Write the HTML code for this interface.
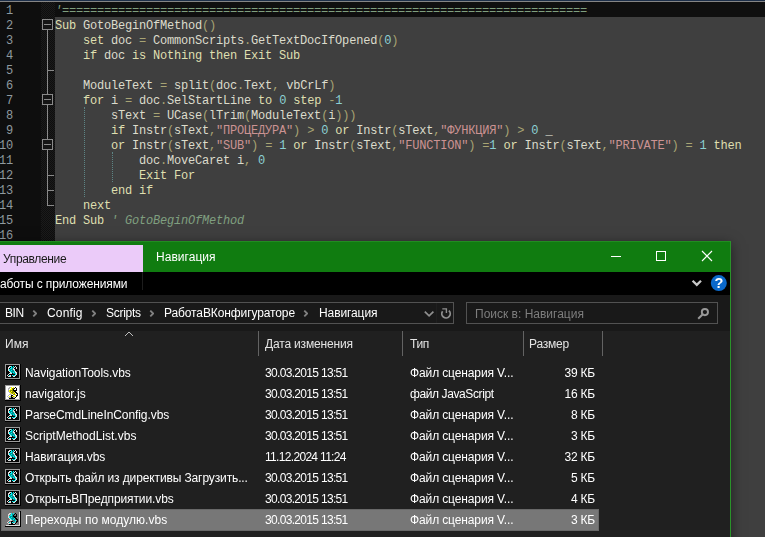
<!DOCTYPE html>
<html lang="ru">
<head>
<meta charset="utf-8">
<title>Навигация</title>
<style>
*{box-sizing:border-box;margin:0;padding:0}
html,body{width:765px;height:537px;overflow:hidden;background:#3f3f3f}
body{position:relative;font-family:"Liberation Sans",sans-serif}
.abs{position:absolute}
/* ---------- editor ---------- */
#ed{position:absolute;left:0;top:0;width:765px;height:537px;background:#3f3f3f}
#topa{left:0;top:0;width:765px;height:1px;background:#1d2f49}
#topb{left:0;top:1px;width:765px;height:1px;background:#858585}
#num{left:0;top:2px;width:41px;height:240px;background:#0e0e0e}
#fold{left:41px;top:2px;width:14px;height:240px;background:#151515;
 background-image:conic-gradient(#0e0e0e 25%,#1b1b1b 0 50%,#0e0e0e 0 75%,#1b1b1b 0);background-size:2px 2px}
#cur{left:55px;top:2px;width:710px;height:15px;background:#0f0f0f}
.ln{position:absolute;left:0;width:765px;height:15px;font:12px/15px "Liberation Mono",monospace;letter-spacing:-0.2px;white-space:pre;color:#dcdccc}
.ln .n{position:absolute;left:-1px;top:2px;width:14px;text-align:right;color:#8f9a9f}
.ln .c{position:absolute;left:55px;top:2px}
.k{color:#dfdfaf}.o{color:#a8a474}.d{color:#8cd0d3}.s{color:#cc9393}.cm{color:#7f9f7f;font-style:italic}.cn{color:#7f9f7f}
.fb{position:absolute;left:42px;width:11px;height:11px;border:1px solid #8a8a8a;background:#151515}
.fb:after{content:"";position:absolute;left:1px;top:4px;width:7px;height:1px;background:#8a8a8a}
.fv{position:absolute;left:47px;width:1px;background:#8a8a8a}
.ft{position:absolute;left:47px;width:7px;height:1px;background:#8a8a8a}
.ig{position:absolute;width:0;border-left:1px dotted #5d8585}
/* ---------- explorer window ---------- */
#win{will-change:transform;left:0;top:241px;width:731px;height:340px;background:#202020;border-right:1px solid #2a932a;box-shadow:0 3px 12px 0 rgba(0,0,0,.5)}
#title{left:0;top:0;width:730px;height:31px;background:#107c10;border-top:1px solid #218c21}
#tab{left:0;top:4px;width:143px;height:27px;background:#ebcbf9;color:#1a1a1a;font-size:12px;line-height:29px;padding-left:3px;letter-spacing:-.35px}
#ttl{left:156px;top:4px;height:27px;line-height:25px;color:#fff;font-size:12px;letter-spacing:.03px}
#rib{left:0;top:31px;width:730px;height:23px;background:#000;color:#fff;font-size:12px;line-height:24px;letter-spacing:-.12px}
#ribsep{left:142px;top:31px;width:1px;height:18px;background:#1d1d1d}
#bar{left:0;top:54px;width:730px;height:36px;background:#191919}
#addr{left:-4px;top:61px;width:458px;height:22px;border:1px solid #525252;background:#191919}
#addrsep{left:436px;top:62px;width:1px;height:20px;background:#1f1f1f}
#srch{left:466px;top:61px;width:252px;height:22px;border:1px solid #525252;background:#191919;color:#7e7e7e;font-size:12px;line-height:22px;padding-left:8px;letter-spacing:0}
.bc{position:absolute;top:61px;height:22px;line-height:23px;color:#fff;font-size:12px;white-space:nowrap}
.bca{position:absolute;top:69px;width:5px;height:7px}
#hdr{left:0;top:90px;width:730px;height:25px;background:#202020}
.hs{position:absolute;top:90px;width:1px;height:25px;background:#636363}
.ht{position:absolute;top:90px;height:25px;line-height:26px;font-size:12px;color:#e4e4e4;white-space:nowrap}
.row{position:absolute;left:0;width:730px;height:21px;font-size:12px;line-height:21px;color:#fff;white-space:nowrap}
.row span{position:absolute;top:1px}
.row .f{left:25px}.row .dt{left:265px;letter-spacing:-.68px}.row .ty{left:410px;letter-spacing:-.12px}.row .sz{right:135px;text-align:right;letter-spacing:-.2px}
.row svg{position:absolute;left:5px;top:2px}
#sel{left:1px;top:268px;width:598px;height:22px;background:#777;border:1px solid #686868}
</style>
</head>
<body>
<div id="ed">
 <div id="topa" class="abs"></div><div id="topb" class="abs"></div>
 <div id="num" class="abs"></div><div id="fold" class="abs"></div><div id="cur" class="abs"></div>

 <!-- fold markers -->
 <div class="fv" style="top:30px;height:176px"></div>
 <div class="fb" style="top:19px"></div>
 <div class="ft" style="top:70px"></div>
 <div class="fb" style="top:94px"></div>
 <div class="fb" style="top:139px"></div>
 <div class="ft" style="top:175px"></div>
 <div class="ft" style="top:190px"></div>
 <div class="ft" style="top:205px"></div>
 <!-- indent guides -->
 <div class="ig" style="left:84px;top:107px;height:90px"></div>
 <div class="ig" style="left:112px;top:152px;height:30px"></div>

 <div class="ln" style="top:2px"><span class="n">1</span><span class="c"><span class="cm">'===========================================================================</span></span></div>
 <div class="ln" style="top:17px"><span class="n">2</span><span class="c"><span class="k">Sub</span> GotoBeginOfMethod<span class="o">()</span></span></div>
 <div class="ln" style="top:32px"><span class="n">3</span><span class="c">    <span class="k">set</span> doc <span class="o">=</span> CommonScripts<span class="o">.</span>GetTextDocIfOpened<span class="o">(</span><span class="d">0</span><span class="o">)</span></span></div>
 <div class="ln" style="top:47px"><span class="n">4</span><span class="c">    <span class="k">if</span> doc <span class="k">is Nothing then Exit Sub</span></span></div>
 <div class="ln" style="top:62px"><span class="n">5</span><span class="c"> </span></div>
 <div class="ln" style="top:77px"><span class="n">6</span><span class="c">    ModuleText <span class="o">=</span> split<span class="o">(</span>doc<span class="o">.</span>Text<span class="o">,</span> vbCrLf<span class="o">)</span></span></div>
 <div class="ln" style="top:92px"><span class="n">7</span><span class="c">    <span class="k">for</span> i <span class="o">=</span> doc<span class="o">.</span>SelStartLine <span class="k">to</span> <span class="d">0</span> <span class="k">step</span> <span class="o">-</span><span class="d">1</span></span></div>
 <div class="ln" style="top:107px"><span class="n">8</span><span class="c">        sText <span class="o">=</span> UCase<span class="o">(</span>lTrim<span class="o">(</span>ModuleText<span class="o">(</span>i<span class="o">)))</span></span></div>
 <div class="ln" style="top:122px"><span class="n">9</span><span class="c">        <span class="k">if</span> Instr<span class="o">(</span>sText<span class="o">,</span><span class="s">"ПРОЦЕДУРА"</span><span class="o">)</span> <span class="o">&gt;</span> <span class="d">0</span> <span class="k">or</span> Instr<span class="o">(</span>sText<span class="o">,</span><span class="s">"ФУНКЦИЯ"</span><span class="o">)</span> <span class="o">&gt;</span> <span class="d">0</span> _</span></div>
 <div class="ln" style="top:137px"><span class="n">10</span><span class="c">        <span class="k">or</span> Instr<span class="o">(</span>sText<span class="o">,</span><span class="s">"SUB"</span><span class="o">)</span> <span class="o">=</span> <span class="d">1</span> <span class="k">or</span> Instr<span class="o">(</span>sText<span class="o">,</span><span class="s">"FUNCTION"</span><span class="o">)</span> <span class="o">=</span><span class="d">1</span> <span class="k">or</span> Instr<span class="o">(</span>sText<span class="o">,</span><span class="s">"PRIVATE"</span><span class="o">)</span> <span class="o">=</span> <span class="d">1</span> <span class="k">then</span></span></div>
 <div class="ln" style="top:152px"><span class="n">11</span><span class="c">            doc<span class="o">.</span>MoveCaret i<span class="o">,</span> <span class="d">0</span></span></div>
 <div class="ln" style="top:167px"><span class="n">12</span><span class="c">            <span class="k">Exit For</span></span></div>
 <div class="ln" style="top:182px"><span class="n">13</span><span class="c">        <span class="k">end if</span></span></div>
 <div class="ln" style="top:197px"><span class="n">14</span><span class="c">    <span class="k">next</span></span></div>
 <div class="ln" style="top:212px"><span class="n">15</span><span class="c"><span class="k">End Sub</span> <span class="cm">' GotoBeginOfMethod</span></span></div>
 <div class="ln" style="top:227px"><span class="n">16</span><span class="c"> </span></div>
</div>

<div id="win" class="abs">
 <div id="title" class="abs"></div>
 <div id="tab" class="abs">Управление</div>
 <div id="ttl" class="abs">Навигация</div>
 <!-- caption buttons -->
 <svg class="abs" style="left:600px;top:0" width="130" height="31" viewBox="0 0 130 31">
  <path d="M11 15.5h10" stroke="#fff" stroke-width="1" fill="none"/>
  <rect x="56.5" y="10.5" width="9" height="9" stroke="#fff" stroke-width="1" fill="none"/>
  <path d="M102 10l10 10M112 10l-10 10" stroke="#fff" stroke-width="1.1" fill="none"/>
 </svg>
 <div id="rib" class="abs">аботы с приложениями</div>
 <div id="ribsep" class="abs"></div>
 <svg class="abs" style="left:688px;top:33px" width="42" height="20" viewBox="0 0 42 20">
  <path d="M4.600 6.700l4.200 4.200 4.200-4.200" stroke="#c8c8c8" stroke-width="2.300" fill="none"/>
  <circle cx="30.800" cy="9.100" r="8" fill="#0b69cb"/>
  <text x="30.900" y="14" text-anchor="middle" font-family="Liberation Sans, sans-serif" font-weight="bold" font-size="14.500" fill="#fff">?</text>
 </svg>
 <div id="bar" class="abs"></div>
 <div id="addr" class="abs"></div>
 <div id="addrsep" class="abs"></div>
 <div class="bc" style="left:5px;letter-spacing:-.4px">BIN</div>
 <div class="bc" style="left:47px;letter-spacing:.15px">Config</div>
 <div class="bc" style="left:106px;letter-spacing:-.28px">Scripts</div>
 <div class="bc" style="left:164px;letter-spacing:-.11px">РаботаВКонфигураторе</div>
 <div class="bc" style="left:319px;letter-spacing:-.1px">Навигация</div>
 <svg class="bca" style="left:32px" viewBox="0 0 5 7"><path d="M1.300 .600l2.900 2.900-2.900 2.900" stroke="#828282" stroke-width="1.800" fill="none"/></svg>
 <svg class="bca" style="left:91px" viewBox="0 0 5 7"><path d="M1.300 .600l2.900 2.900-2.900 2.900" stroke="#828282" stroke-width="1.800" fill="none"/></svg>
 <svg class="bca" style="left:149px" viewBox="0 0 5 7"><path d="M1.300 .600l2.900 2.900-2.900 2.900" stroke="#828282" stroke-width="1.800" fill="none"/></svg>
 <svg class="bca" style="left:303px" viewBox="0 0 5 7"><path d="M1.300 .600l2.900 2.900-2.900 2.900" stroke="#828282" stroke-width="1.800" fill="none"/></svg>
 <svg class="abs" style="left:422px;top:63px" width="32" height="20" viewBox="0 0 32 20">
  <path d="M2.800 7.600l4.300 4.300 4.300-4.300" stroke="#8f8f8f" stroke-width="1.700" fill="none"/>
  <path d="M26.900 6.700A4.200 4.200 0 1 1 20.600 7.300" stroke="#8f8f8f" stroke-width="1.800" fill="none"/>
  <path d="M20.300 4.900H24.400V8.900" stroke="#8f8f8f" stroke-width="1.400" fill="none"/>
 </svg>
 <div id="srch" class="abs">Поиск в: Навигация</div>
 <svg class="abs" style="left:696px;top:66px" width="14" height="14" viewBox="0 0 14 14">
  <circle cx="8.900" cy="5.100" r="3.100" stroke="#999999" stroke-width="1.900" fill="none"/>
  <path d="M6.500 7.500l-4.300 4.300" stroke="#999999" stroke-width="2" fill="none"/>
 </svg>

 <div id="hdr" class="abs"></div>
 <svg class="abs" style="left:124px;top:90px" width="10" height="6" viewBox="0 0 10 6"><path d="M1 5l4-4 4 4" stroke="#bdbdbd" stroke-width="1" fill="none"/></svg>
 <div class="hs" style="left:258px"></div><div class="hs" style="left:402px"></div><div class="hs" style="left:523px"></div><div class="hs" style="left:602px"></div>
 <div class="ht" style="left:5px">Имя</div>
 <div class="ht" style="left:265px;letter-spacing:-.17px">Дата изменения</div>
 <div class="ht" style="left:410px;letter-spacing:-.4px">Тип</div>
 <div class="ht" style="left:529px;letter-spacing:-.2px">Размер</div>

 <div id="sel" class="abs"></div>

 <div class="row" style="top:121px"><svg width="16" height="16" viewBox="0 0 16 16" shape-rendering="crispEdges"><rect x="1" y="1" width="13" height="13" fill="#050505"/><rect x="0" y="0" width="15" height="1" fill="#9c9c9c"/><rect x="15" y="0" width="1" height="1" fill="#000"/><rect x="0" y="1" width="1" height="1" fill="#9c9c9c"/><rect x="14" y="1" width="1" height="1" fill="#9c9c9c"/><rect x="15" y="1" width="1" height="1" fill="#000"/><rect x="0" y="2" width="1" height="1" fill="#9c9c9c"/><rect x="4" y="2" width="2" height="1" fill="#e0e0e0"/><rect x="6" y="2" width="1" height="1" fill="#00f0f0"/><rect x="8" y="2" width="1" height="1" fill="#00f0f0"/><rect x="10" y="2" width="1" height="1" fill="#e0e0e0"/><rect x="14" y="2" width="1" height="1" fill="#9c9c9c"/><rect x="15" y="2" width="1" height="1" fill="#000"/><rect x="0" y="3" width="1" height="1" fill="#9c9c9c"/><rect x="3" y="3" width="2" height="1" fill="#e0e0e0"/><rect x="6" y="3" width="1" height="1" fill="#00f0f0"/><rect x="7" y="3" width="2" height="1" fill="#009090"/><rect x="9" y="3" width="1" height="1" fill="#e0e0e0"/><rect x="11" y="3" width="1" height="1" fill="#e0e0e0"/><rect x="14" y="3" width="1" height="1" fill="#9c9c9c"/><rect x="15" y="3" width="1" height="1" fill="#000"/><rect x="0" y="4" width="1" height="1" fill="#9c9c9c"/><rect x="3" y="4" width="1" height="1" fill="#e0e0e0"/><rect x="5" y="4" width="2" height="1" fill="#00f0f0"/><rect x="7" y="4" width="1" height="1" fill="#009090"/><rect x="8" y="4" width="1" height="1" fill="#e0e0e0"/><rect x="11" y="4" width="1" height="1" fill="#e0e0e0"/><rect x="14" y="4" width="1" height="1" fill="#9c9c9c"/><rect x="15" y="4" width="1" height="1" fill="#000"/><rect x="0" y="5" width="1" height="1" fill="#9c9c9c"/><rect x="3" y="5" width="1" height="1" fill="#e0e0e0"/><rect x="4" y="5" width="1" height="1" fill="#00f0f0"/><rect x="5" y="5" width="3" height="1" fill="#009090"/><rect x="8" y="5" width="2" height="1" fill="#e0e0e0"/><rect x="14" y="5" width="1" height="1" fill="#9c9c9c"/><rect x="15" y="5" width="1" height="1" fill="#000"/><rect x="0" y="6" width="1" height="1" fill="#9c9c9c"/><rect x="3" y="6" width="1" height="1" fill="#e0e0e0"/><rect x="4" y="6" width="1" height="1" fill="#00f0f0"/><rect x="5" y="6" width="1" height="1" fill="#009090"/><rect x="6" y="6" width="1" height="1" fill="#00f0f0"/><rect x="7" y="6" width="2" height="1" fill="#009090"/><rect x="9" y="6" width="1" height="1" fill="#e0e0e0"/><rect x="14" y="6" width="1" height="1" fill="#9c9c9c"/><rect x="15" y="6" width="1" height="1" fill="#000"/><rect x="0" y="7" width="1" height="1" fill="#9c9c9c"/><rect x="4" y="7" width="1" height="1" fill="#e0e0e0"/><rect x="5" y="7" width="1" height="1" fill="#00f0f0"/><rect x="6" y="7" width="3" height="1" fill="#009090"/><rect x="9" y="7" width="1" height="1" fill="#00f0f0"/><rect x="10" y="7" width="1" height="1" fill="#e0e0e0"/><rect x="14" y="7" width="1" height="1" fill="#9c9c9c"/><rect x="15" y="7" width="1" height="1" fill="#000"/><rect x="0" y="8" width="1" height="1" fill="#9c9c9c"/><rect x="5" y="8" width="1" height="1" fill="#e0e0e0"/><rect x="6" y="8" width="1" height="1" fill="#00f0f0"/><rect x="7" y="8" width="1" height="1" fill="#009090"/><rect x="8" y="8" width="1" height="1" fill="#00f0f0"/><rect x="9" y="8" width="1" height="1" fill="#009090"/><rect x="10" y="8" width="2" height="1" fill="#e0e0e0"/><rect x="14" y="8" width="1" height="1" fill="#9c9c9c"/><rect x="15" y="8" width="1" height="1" fill="#000"/><rect x="0" y="9" width="1" height="1" fill="#9c9c9c"/><rect x="4" y="9" width="3" height="1" fill="#e0e0e0"/><rect x="8" y="9" width="2" height="1" fill="#009090"/><rect x="10" y="9" width="1" height="1" fill="#00f0f0"/><rect x="11" y="9" width="1" height="1" fill="#e0e0e0"/><rect x="14" y="9" width="1" height="1" fill="#9c9c9c"/><rect x="15" y="9" width="1" height="1" fill="#000"/><rect x="0" y="10" width="1" height="1" fill="#9c9c9c"/><rect x="3" y="10" width="1" height="1" fill="#e0e0e0"/><rect x="10" y="10" width="1" height="1" fill="#00f0f0"/><rect x="11" y="10" width="1" height="1" fill="#e0e0e0"/><rect x="14" y="10" width="1" height="1" fill="#9c9c9c"/><rect x="15" y="10" width="1" height="1" fill="#000"/><rect x="0" y="11" width="1" height="1" fill="#9c9c9c"/><rect x="2" y="11" width="1" height="1" fill="#e0e0e0"/><rect x="4" y="11" width="1" height="1" fill="#00f0f0"/><rect x="5" y="11" width="1" height="1" fill="#e0e0e0"/><rect x="7" y="11" width="1" height="1" fill="#00f0f0"/><rect x="8" y="11" width="1" height="1" fill="#009090"/><rect x="9" y="11" width="1" height="1" fill="#00f0f0"/><rect x="10" y="11" width="1" height="1" fill="#e0e0e0"/><rect x="14" y="11" width="1" height="1" fill="#9c9c9c"/><rect x="15" y="11" width="1" height="1" fill="#000"/><rect x="0" y="12" width="1" height="1" fill="#9c9c9c"/><rect x="3" y="12" width="3" height="1" fill="#e0e0e0"/><rect x="8" y="12" width="2" height="1" fill="#e0e0e0"/><rect x="14" y="12" width="1" height="1" fill="#9c9c9c"/><rect x="15" y="12" width="1" height="1" fill="#000"/><rect x="0" y="13" width="1" height="1" fill="#9c9c9c"/><rect x="14" y="13" width="1" height="1" fill="#9c9c9c"/><rect x="15" y="13" width="1" height="1" fill="#000"/><rect x="0" y="14" width="15" height="1" fill="#9c9c9c"/><rect x="15" y="14" width="1" height="1" fill="#000"/><rect x="0" y="15" width="16" height="1" fill="#000"/></svg><span class="f" style="letter-spacing:-.05px">NavigationTools.vbs</span><span class="dt">30.03.2015 13:51</span><span class="ty">Файл сценария V...</span><span class="sz">39 КБ</span></div>
 <div class="row" style="top:142px"><svg width="16" height="16" viewBox="0 0 16 16" shape-rendering="crispEdges"><rect x="1" y="1" width="13" height="13" fill="#fff"/><rect x="0" y="0" width="15" height="1" fill="#9c9c9c"/><rect x="15" y="0" width="1" height="1" fill="#000"/><rect x="0" y="1" width="1" height="1" fill="#9c9c9c"/><rect x="14" y="1" width="1" height="1" fill="#9c9c9c"/><rect x="15" y="1" width="1" height="1" fill="#000"/><rect x="0" y="2" width="1" height="1" fill="#9c9c9c"/><rect x="4" y="2" width="2" height="1" fill="#b8b8b8"/><rect x="6" y="2" width="1" height="1" fill="#ffff00"/><rect x="8" y="2" width="1" height="1" fill="#ffff00"/><rect x="10" y="2" width="1" height="1" fill="#000"/><rect x="14" y="2" width="1" height="1" fill="#9c9c9c"/><rect x="15" y="2" width="1" height="1" fill="#000"/><rect x="0" y="3" width="1" height="1" fill="#9c9c9c"/><rect x="3" y="3" width="2" height="1" fill="#b8b8b8"/><rect x="6" y="3" width="1" height="1" fill="#ffff00"/><rect x="7" y="3" width="2" height="1" fill="#8a8a00"/><rect x="9" y="3" width="1" height="1" fill="#000"/><rect x="11" y="3" width="1" height="1" fill="#000"/><rect x="14" y="3" width="1" height="1" fill="#9c9c9c"/><rect x="15" y="3" width="1" height="1" fill="#000"/><rect x="0" y="4" width="1" height="1" fill="#9c9c9c"/><rect x="3" y="4" width="1" height="1" fill="#b8b8b8"/><rect x="5" y="4" width="2" height="1" fill="#ffff00"/><rect x="7" y="4" width="1" height="1" fill="#8a8a00"/><rect x="8" y="4" width="1" height="1" fill="#000"/><rect x="11" y="4" width="1" height="1" fill="#000"/><rect x="14" y="4" width="1" height="1" fill="#9c9c9c"/><rect x="15" y="4" width="1" height="1" fill="#000"/><rect x="0" y="5" width="1" height="1" fill="#9c9c9c"/><rect x="3" y="5" width="1" height="1" fill="#b8b8b8"/><rect x="4" y="5" width="1" height="1" fill="#ffff00"/><rect x="5" y="5" width="3" height="1" fill="#8a8a00"/><rect x="8" y="5" width="4" height="1" fill="#000"/><rect x="14" y="5" width="1" height="1" fill="#9c9c9c"/><rect x="15" y="5" width="1" height="1" fill="#000"/><rect x="0" y="6" width="1" height="1" fill="#9c9c9c"/><rect x="3" y="6" width="1" height="1" fill="#b8b8b8"/><rect x="4" y="6" width="1" height="1" fill="#ffff00"/><rect x="5" y="6" width="1" height="1" fill="#8a8a00"/><rect x="6" y="6" width="1" height="1" fill="#ffff00"/><rect x="7" y="6" width="2" height="1" fill="#8a8a00"/><rect x="9" y="6" width="2" height="1" fill="#000"/><rect x="14" y="6" width="1" height="1" fill="#9c9c9c"/><rect x="15" y="6" width="1" height="1" fill="#000"/><rect x="0" y="7" width="1" height="1" fill="#9c9c9c"/><rect x="4" y="7" width="1" height="1" fill="#b8b8b8"/><rect x="5" y="7" width="1" height="1" fill="#ffff00"/><rect x="6" y="7" width="3" height="1" fill="#8a8a00"/><rect x="9" y="7" width="1" height="1" fill="#ffff00"/><rect x="10" y="7" width="2" height="1" fill="#000"/><rect x="14" y="7" width="1" height="1" fill="#9c9c9c"/><rect x="15" y="7" width="1" height="1" fill="#000"/><rect x="0" y="8" width="1" height="1" fill="#9c9c9c"/><rect x="5" y="8" width="1" height="1" fill="#b8b8b8"/><rect x="6" y="8" width="1" height="1" fill="#ffff00"/><rect x="7" y="8" width="1" height="1" fill="#8a8a00"/><rect x="8" y="8" width="1" height="1" fill="#ffff00"/><rect x="9" y="8" width="1" height="1" fill="#8a8a00"/><rect x="11" y="8" width="2" height="1" fill="#000"/><rect x="14" y="8" width="1" height="1" fill="#9c9c9c"/><rect x="15" y="8" width="1" height="1" fill="#000"/><rect x="0" y="9" width="1" height="1" fill="#9c9c9c"/><rect x="4" y="9" width="3" height="1" fill="#b8b8b8"/><rect x="8" y="9" width="2" height="1" fill="#8a8a00"/><rect x="10" y="9" width="1" height="1" fill="#ffff00"/><rect x="12" y="9" width="1" height="1" fill="#000"/><rect x="14" y="9" width="1" height="1" fill="#9c9c9c"/><rect x="15" y="9" width="1" height="1" fill="#000"/><rect x="0" y="10" width="1" height="1" fill="#9c9c9c"/><rect x="3" y="10" width="1" height="1" fill="#b8b8b8"/><rect x="6" y="10" width="2" height="1" fill="#000"/><rect x="10" y="10" width="1" height="1" fill="#ffff00"/><rect x="11" y="10" width="2" height="1" fill="#000"/><rect x="14" y="10" width="1" height="1" fill="#9c9c9c"/><rect x="15" y="10" width="1" height="1" fill="#000"/><rect x="0" y="11" width="1" height="1" fill="#9c9c9c"/><rect x="2" y="11" width="1" height="1" fill="#b8b8b8"/><rect x="4" y="11" width="1" height="1" fill="#ffff00"/><rect x="5" y="11" width="1" height="1" fill="#b8b8b8"/><rect x="6" y="11" width="1" height="1" fill="#000"/><rect x="7" y="11" width="1" height="1" fill="#ffff00"/><rect x="8" y="11" width="1" height="1" fill="#8a8a00"/><rect x="9" y="11" width="1" height="1" fill="#ffff00"/><rect x="11" y="11" width="1" height="1" fill="#000"/><rect x="14" y="11" width="1" height="1" fill="#9c9c9c"/><rect x="15" y="11" width="1" height="1" fill="#000"/><rect x="0" y="12" width="1" height="1" fill="#9c9c9c"/><rect x="3" y="12" width="3" height="1" fill="#b8b8b8"/><rect x="6" y="12" width="2" height="1" fill="#000"/><rect x="8" y="12" width="2" height="1" fill="#b8b8b8"/><rect x="10" y="12" width="1" height="1" fill="#000"/><rect x="14" y="12" width="1" height="1" fill="#9c9c9c"/><rect x="15" y="12" width="1" height="1" fill="#000"/><rect x="0" y="13" width="1" height="1" fill="#9c9c9c"/><rect x="4" y="13" width="6" height="1" fill="#000"/><rect x="14" y="13" width="1" height="1" fill="#9c9c9c"/><rect x="15" y="13" width="1" height="1" fill="#000"/><rect x="0" y="14" width="15" height="1" fill="#9c9c9c"/><rect x="15" y="14" width="1" height="1" fill="#000"/><rect x="0" y="15" width="16" height="1" fill="#000"/></svg><span class="f">navigator.js</span><span class="dt">30.03.2015 13:51</span><span class="ty" style="letter-spacing:-.4px">файл JavaScript</span><span class="sz">16 КБ</span></div>
 <div class="row" style="top:163px"><svg width="16" height="16" viewBox="0 0 16 16" shape-rendering="crispEdges"><rect x="1" y="1" width="13" height="13" fill="#050505"/><rect x="0" y="0" width="15" height="1" fill="#9c9c9c"/><rect x="15" y="0" width="1" height="1" fill="#000"/><rect x="0" y="1" width="1" height="1" fill="#9c9c9c"/><rect x="14" y="1" width="1" height="1" fill="#9c9c9c"/><rect x="15" y="1" width="1" height="1" fill="#000"/><rect x="0" y="2" width="1" height="1" fill="#9c9c9c"/><rect x="4" y="2" width="2" height="1" fill="#e0e0e0"/><rect x="6" y="2" width="1" height="1" fill="#00f0f0"/><rect x="8" y="2" width="1" height="1" fill="#00f0f0"/><rect x="10" y="2" width="1" height="1" fill="#e0e0e0"/><rect x="14" y="2" width="1" height="1" fill="#9c9c9c"/><rect x="15" y="2" width="1" height="1" fill="#000"/><rect x="0" y="3" width="1" height="1" fill="#9c9c9c"/><rect x="3" y="3" width="2" height="1" fill="#e0e0e0"/><rect x="6" y="3" width="1" height="1" fill="#00f0f0"/><rect x="7" y="3" width="2" height="1" fill="#009090"/><rect x="9" y="3" width="1" height="1" fill="#e0e0e0"/><rect x="11" y="3" width="1" height="1" fill="#e0e0e0"/><rect x="14" y="3" width="1" height="1" fill="#9c9c9c"/><rect x="15" y="3" width="1" height="1" fill="#000"/><rect x="0" y="4" width="1" height="1" fill="#9c9c9c"/><rect x="3" y="4" width="1" height="1" fill="#e0e0e0"/><rect x="5" y="4" width="2" height="1" fill="#00f0f0"/><rect x="7" y="4" width="1" height="1" fill="#009090"/><rect x="8" y="4" width="1" height="1" fill="#e0e0e0"/><rect x="11" y="4" width="1" height="1" fill="#e0e0e0"/><rect x="14" y="4" width="1" height="1" fill="#9c9c9c"/><rect x="15" y="4" width="1" height="1" fill="#000"/><rect x="0" y="5" width="1" height="1" fill="#9c9c9c"/><rect x="3" y="5" width="1" height="1" fill="#e0e0e0"/><rect x="4" y="5" width="1" height="1" fill="#00f0f0"/><rect x="5" y="5" width="3" height="1" fill="#009090"/><rect x="8" y="5" width="2" height="1" fill="#e0e0e0"/><rect x="14" y="5" width="1" height="1" fill="#9c9c9c"/><rect x="15" y="5" width="1" height="1" fill="#000"/><rect x="0" y="6" width="1" height="1" fill="#9c9c9c"/><rect x="3" y="6" width="1" height="1" fill="#e0e0e0"/><rect x="4" y="6" width="1" height="1" fill="#00f0f0"/><rect x="5" y="6" width="1" height="1" fill="#009090"/><rect x="6" y="6" width="1" height="1" fill="#00f0f0"/><rect x="7" y="6" width="2" height="1" fill="#009090"/><rect x="9" y="6" width="1" height="1" fill="#e0e0e0"/><rect x="14" y="6" width="1" height="1" fill="#9c9c9c"/><rect x="15" y="6" width="1" height="1" fill="#000"/><rect x="0" y="7" width="1" height="1" fill="#9c9c9c"/><rect x="4" y="7" width="1" height="1" fill="#e0e0e0"/><rect x="5" y="7" width="1" height="1" fill="#00f0f0"/><rect x="6" y="7" width="3" height="1" fill="#009090"/><rect x="9" y="7" width="1" height="1" fill="#00f0f0"/><rect x="10" y="7" width="1" height="1" fill="#e0e0e0"/><rect x="14" y="7" width="1" height="1" fill="#9c9c9c"/><rect x="15" y="7" width="1" height="1" fill="#000"/><rect x="0" y="8" width="1" height="1" fill="#9c9c9c"/><rect x="5" y="8" width="1" height="1" fill="#e0e0e0"/><rect x="6" y="8" width="1" height="1" fill="#00f0f0"/><rect x="7" y="8" width="1" height="1" fill="#009090"/><rect x="8" y="8" width="1" height="1" fill="#00f0f0"/><rect x="9" y="8" width="1" height="1" fill="#009090"/><rect x="10" y="8" width="2" height="1" fill="#e0e0e0"/><rect x="14" y="8" width="1" height="1" fill="#9c9c9c"/><rect x="15" y="8" width="1" height="1" fill="#000"/><rect x="0" y="9" width="1" height="1" fill="#9c9c9c"/><rect x="4" y="9" width="3" height="1" fill="#e0e0e0"/><rect x="8" y="9" width="2" height="1" fill="#009090"/><rect x="10" y="9" width="1" height="1" fill="#00f0f0"/><rect x="11" y="9" width="1" height="1" fill="#e0e0e0"/><rect x="14" y="9" width="1" height="1" fill="#9c9c9c"/><rect x="15" y="9" width="1" height="1" fill="#000"/><rect x="0" y="10" width="1" height="1" fill="#9c9c9c"/><rect x="3" y="10" width="1" height="1" fill="#e0e0e0"/><rect x="10" y="10" width="1" height="1" fill="#00f0f0"/><rect x="11" y="10" width="1" height="1" fill="#e0e0e0"/><rect x="14" y="10" width="1" height="1" fill="#9c9c9c"/><rect x="15" y="10" width="1" height="1" fill="#000"/><rect x="0" y="11" width="1" height="1" fill="#9c9c9c"/><rect x="2" y="11" width="1" height="1" fill="#e0e0e0"/><rect x="4" y="11" width="1" height="1" fill="#00f0f0"/><rect x="5" y="11" width="1" height="1" fill="#e0e0e0"/><rect x="7" y="11" width="1" height="1" fill="#00f0f0"/><rect x="8" y="11" width="1" height="1" fill="#009090"/><rect x="9" y="11" width="1" height="1" fill="#00f0f0"/><rect x="10" y="11" width="1" height="1" fill="#e0e0e0"/><rect x="14" y="11" width="1" height="1" fill="#9c9c9c"/><rect x="15" y="11" width="1" height="1" fill="#000"/><rect x="0" y="12" width="1" height="1" fill="#9c9c9c"/><rect x="3" y="12" width="3" height="1" fill="#e0e0e0"/><rect x="8" y="12" width="2" height="1" fill="#e0e0e0"/><rect x="14" y="12" width="1" height="1" fill="#9c9c9c"/><rect x="15" y="12" width="1" height="1" fill="#000"/><rect x="0" y="13" width="1" height="1" fill="#9c9c9c"/><rect x="14" y="13" width="1" height="1" fill="#9c9c9c"/><rect x="15" y="13" width="1" height="1" fill="#000"/><rect x="0" y="14" width="15" height="1" fill="#9c9c9c"/><rect x="15" y="14" width="1" height="1" fill="#000"/><rect x="0" y="15" width="16" height="1" fill="#000"/></svg><span class="f" style="letter-spacing:-0.08px">ParseCmdLineInConfig.vbs</span><span class="dt">30.03.2015 13:51</span><span class="ty">Файл сценария V...</span><span class="sz">8 КБ</span></div>
 <div class="row" style="top:184px"><svg width="16" height="16" viewBox="0 0 16 16" shape-rendering="crispEdges"><rect x="1" y="1" width="13" height="13" fill="#050505"/><rect x="0" y="0" width="15" height="1" fill="#9c9c9c"/><rect x="15" y="0" width="1" height="1" fill="#000"/><rect x="0" y="1" width="1" height="1" fill="#9c9c9c"/><rect x="14" y="1" width="1" height="1" fill="#9c9c9c"/><rect x="15" y="1" width="1" height="1" fill="#000"/><rect x="0" y="2" width="1" height="1" fill="#9c9c9c"/><rect x="4" y="2" width="2" height="1" fill="#e0e0e0"/><rect x="6" y="2" width="1" height="1" fill="#00f0f0"/><rect x="8" y="2" width="1" height="1" fill="#00f0f0"/><rect x="10" y="2" width="1" height="1" fill="#e0e0e0"/><rect x="14" y="2" width="1" height="1" fill="#9c9c9c"/><rect x="15" y="2" width="1" height="1" fill="#000"/><rect x="0" y="3" width="1" height="1" fill="#9c9c9c"/><rect x="3" y="3" width="2" height="1" fill="#e0e0e0"/><rect x="6" y="3" width="1" height="1" fill="#00f0f0"/><rect x="7" y="3" width="2" height="1" fill="#009090"/><rect x="9" y="3" width="1" height="1" fill="#e0e0e0"/><rect x="11" y="3" width="1" height="1" fill="#e0e0e0"/><rect x="14" y="3" width="1" height="1" fill="#9c9c9c"/><rect x="15" y="3" width="1" height="1" fill="#000"/><rect x="0" y="4" width="1" height="1" fill="#9c9c9c"/><rect x="3" y="4" width="1" height="1" fill="#e0e0e0"/><rect x="5" y="4" width="2" height="1" fill="#00f0f0"/><rect x="7" y="4" width="1" height="1" fill="#009090"/><rect x="8" y="4" width="1" height="1" fill="#e0e0e0"/><rect x="11" y="4" width="1" height="1" fill="#e0e0e0"/><rect x="14" y="4" width="1" height="1" fill="#9c9c9c"/><rect x="15" y="4" width="1" height="1" fill="#000"/><rect x="0" y="5" width="1" height="1" fill="#9c9c9c"/><rect x="3" y="5" width="1" height="1" fill="#e0e0e0"/><rect x="4" y="5" width="1" height="1" fill="#00f0f0"/><rect x="5" y="5" width="3" height="1" fill="#009090"/><rect x="8" y="5" width="2" height="1" fill="#e0e0e0"/><rect x="14" y="5" width="1" height="1" fill="#9c9c9c"/><rect x="15" y="5" width="1" height="1" fill="#000"/><rect x="0" y="6" width="1" height="1" fill="#9c9c9c"/><rect x="3" y="6" width="1" height="1" fill="#e0e0e0"/><rect x="4" y="6" width="1" height="1" fill="#00f0f0"/><rect x="5" y="6" width="1" height="1" fill="#009090"/><rect x="6" y="6" width="1" height="1" fill="#00f0f0"/><rect x="7" y="6" width="2" height="1" fill="#009090"/><rect x="9" y="6" width="1" height="1" fill="#e0e0e0"/><rect x="14" y="6" width="1" height="1" fill="#9c9c9c"/><rect x="15" y="6" width="1" height="1" fill="#000"/><rect x="0" y="7" width="1" height="1" fill="#9c9c9c"/><rect x="4" y="7" width="1" height="1" fill="#e0e0e0"/><rect x="5" y="7" width="1" height="1" fill="#00f0f0"/><rect x="6" y="7" width="3" height="1" fill="#009090"/><rect x="9" y="7" width="1" height="1" fill="#00f0f0"/><rect x="10" y="7" width="1" height="1" fill="#e0e0e0"/><rect x="14" y="7" width="1" height="1" fill="#9c9c9c"/><rect x="15" y="7" width="1" height="1" fill="#000"/><rect x="0" y="8" width="1" height="1" fill="#9c9c9c"/><rect x="5" y="8" width="1" height="1" fill="#e0e0e0"/><rect x="6" y="8" width="1" height="1" fill="#00f0f0"/><rect x="7" y="8" width="1" height="1" fill="#009090"/><rect x="8" y="8" width="1" height="1" fill="#00f0f0"/><rect x="9" y="8" width="1" height="1" fill="#009090"/><rect x="10" y="8" width="2" height="1" fill="#e0e0e0"/><rect x="14" y="8" width="1" height="1" fill="#9c9c9c"/><rect x="15" y="8" width="1" height="1" fill="#000"/><rect x="0" y="9" width="1" height="1" fill="#9c9c9c"/><rect x="4" y="9" width="3" height="1" fill="#e0e0e0"/><rect x="8" y="9" width="2" height="1" fill="#009090"/><rect x="10" y="9" width="1" height="1" fill="#00f0f0"/><rect x="11" y="9" width="1" height="1" fill="#e0e0e0"/><rect x="14" y="9" width="1" height="1" fill="#9c9c9c"/><rect x="15" y="9" width="1" height="1" fill="#000"/><rect x="0" y="10" width="1" height="1" fill="#9c9c9c"/><rect x="3" y="10" width="1" height="1" fill="#e0e0e0"/><rect x="10" y="10" width="1" height="1" fill="#00f0f0"/><rect x="11" y="10" width="1" height="1" fill="#e0e0e0"/><rect x="14" y="10" width="1" height="1" fill="#9c9c9c"/><rect x="15" y="10" width="1" height="1" fill="#000"/><rect x="0" y="11" width="1" height="1" fill="#9c9c9c"/><rect x="2" y="11" width="1" height="1" fill="#e0e0e0"/><rect x="4" y="11" width="1" height="1" fill="#00f0f0"/><rect x="5" y="11" width="1" height="1" fill="#e0e0e0"/><rect x="7" y="11" width="1" height="1" fill="#00f0f0"/><rect x="8" y="11" width="1" height="1" fill="#009090"/><rect x="9" y="11" width="1" height="1" fill="#00f0f0"/><rect x="10" y="11" width="1" height="1" fill="#e0e0e0"/><rect x="14" y="11" width="1" height="1" fill="#9c9c9c"/><rect x="15" y="11" width="1" height="1" fill="#000"/><rect x="0" y="12" width="1" height="1" fill="#9c9c9c"/><rect x="3" y="12" width="3" height="1" fill="#e0e0e0"/><rect x="8" y="12" width="2" height="1" fill="#e0e0e0"/><rect x="14" y="12" width="1" height="1" fill="#9c9c9c"/><rect x="15" y="12" width="1" height="1" fill="#000"/><rect x="0" y="13" width="1" height="1" fill="#9c9c9c"/><rect x="14" y="13" width="1" height="1" fill="#9c9c9c"/><rect x="15" y="13" width="1" height="1" fill="#000"/><rect x="0" y="14" width="15" height="1" fill="#9c9c9c"/><rect x="15" y="14" width="1" height="1" fill="#000"/><rect x="0" y="15" width="16" height="1" fill="#000"/></svg><span class="f" style="letter-spacing:0px">ScriptMethodList.vbs</span><span class="dt">30.03.2015 13:51</span><span class="ty">Файл сценария V...</span><span class="sz">3 КБ</span></div>
 <div class="row" style="top:205px"><svg width="16" height="16" viewBox="0 0 16 16" shape-rendering="crispEdges"><rect x="1" y="1" width="13" height="13" fill="#050505"/><rect x="0" y="0" width="15" height="1" fill="#9c9c9c"/><rect x="15" y="0" width="1" height="1" fill="#000"/><rect x="0" y="1" width="1" height="1" fill="#9c9c9c"/><rect x="14" y="1" width="1" height="1" fill="#9c9c9c"/><rect x="15" y="1" width="1" height="1" fill="#000"/><rect x="0" y="2" width="1" height="1" fill="#9c9c9c"/><rect x="4" y="2" width="2" height="1" fill="#e0e0e0"/><rect x="6" y="2" width="1" height="1" fill="#00f0f0"/><rect x="8" y="2" width="1" height="1" fill="#00f0f0"/><rect x="10" y="2" width="1" height="1" fill="#e0e0e0"/><rect x="14" y="2" width="1" height="1" fill="#9c9c9c"/><rect x="15" y="2" width="1" height="1" fill="#000"/><rect x="0" y="3" width="1" height="1" fill="#9c9c9c"/><rect x="3" y="3" width="2" height="1" fill="#e0e0e0"/><rect x="6" y="3" width="1" height="1" fill="#00f0f0"/><rect x="7" y="3" width="2" height="1" fill="#009090"/><rect x="9" y="3" width="1" height="1" fill="#e0e0e0"/><rect x="11" y="3" width="1" height="1" fill="#e0e0e0"/><rect x="14" y="3" width="1" height="1" fill="#9c9c9c"/><rect x="15" y="3" width="1" height="1" fill="#000"/><rect x="0" y="4" width="1" height="1" fill="#9c9c9c"/><rect x="3" y="4" width="1" height="1" fill="#e0e0e0"/><rect x="5" y="4" width="2" height="1" fill="#00f0f0"/><rect x="7" y="4" width="1" height="1" fill="#009090"/><rect x="8" y="4" width="1" height="1" fill="#e0e0e0"/><rect x="11" y="4" width="1" height="1" fill="#e0e0e0"/><rect x="14" y="4" width="1" height="1" fill="#9c9c9c"/><rect x="15" y="4" width="1" height="1" fill="#000"/><rect x="0" y="5" width="1" height="1" fill="#9c9c9c"/><rect x="3" y="5" width="1" height="1" fill="#e0e0e0"/><rect x="4" y="5" width="1" height="1" fill="#00f0f0"/><rect x="5" y="5" width="3" height="1" fill="#009090"/><rect x="8" y="5" width="2" height="1" fill="#e0e0e0"/><rect x="14" y="5" width="1" height="1" fill="#9c9c9c"/><rect x="15" y="5" width="1" height="1" fill="#000"/><rect x="0" y="6" width="1" height="1" fill="#9c9c9c"/><rect x="3" y="6" width="1" height="1" fill="#e0e0e0"/><rect x="4" y="6" width="1" height="1" fill="#00f0f0"/><rect x="5" y="6" width="1" height="1" fill="#009090"/><rect x="6" y="6" width="1" height="1" fill="#00f0f0"/><rect x="7" y="6" width="2" height="1" fill="#009090"/><rect x="9" y="6" width="1" height="1" fill="#e0e0e0"/><rect x="14" y="6" width="1" height="1" fill="#9c9c9c"/><rect x="15" y="6" width="1" height="1" fill="#000"/><rect x="0" y="7" width="1" height="1" fill="#9c9c9c"/><rect x="4" y="7" width="1" height="1" fill="#e0e0e0"/><rect x="5" y="7" width="1" height="1" fill="#00f0f0"/><rect x="6" y="7" width="3" height="1" fill="#009090"/><rect x="9" y="7" width="1" height="1" fill="#00f0f0"/><rect x="10" y="7" width="1" height="1" fill="#e0e0e0"/><rect x="14" y="7" width="1" height="1" fill="#9c9c9c"/><rect x="15" y="7" width="1" height="1" fill="#000"/><rect x="0" y="8" width="1" height="1" fill="#9c9c9c"/><rect x="5" y="8" width="1" height="1" fill="#e0e0e0"/><rect x="6" y="8" width="1" height="1" fill="#00f0f0"/><rect x="7" y="8" width="1" height="1" fill="#009090"/><rect x="8" y="8" width="1" height="1" fill="#00f0f0"/><rect x="9" y="8" width="1" height="1" fill="#009090"/><rect x="10" y="8" width="2" height="1" fill="#e0e0e0"/><rect x="14" y="8" width="1" height="1" fill="#9c9c9c"/><rect x="15" y="8" width="1" height="1" fill="#000"/><rect x="0" y="9" width="1" height="1" fill="#9c9c9c"/><rect x="4" y="9" width="3" height="1" fill="#e0e0e0"/><rect x="8" y="9" width="2" height="1" fill="#009090"/><rect x="10" y="9" width="1" height="1" fill="#00f0f0"/><rect x="11" y="9" width="1" height="1" fill="#e0e0e0"/><rect x="14" y="9" width="1" height="1" fill="#9c9c9c"/><rect x="15" y="9" width="1" height="1" fill="#000"/><rect x="0" y="10" width="1" height="1" fill="#9c9c9c"/><rect x="3" y="10" width="1" height="1" fill="#e0e0e0"/><rect x="10" y="10" width="1" height="1" fill="#00f0f0"/><rect x="11" y="10" width="1" height="1" fill="#e0e0e0"/><rect x="14" y="10" width="1" height="1" fill="#9c9c9c"/><rect x="15" y="10" width="1" height="1" fill="#000"/><rect x="0" y="11" width="1" height="1" fill="#9c9c9c"/><rect x="2" y="11" width="1" height="1" fill="#e0e0e0"/><rect x="4" y="11" width="1" height="1" fill="#00f0f0"/><rect x="5" y="11" width="1" height="1" fill="#e0e0e0"/><rect x="7" y="11" width="1" height="1" fill="#00f0f0"/><rect x="8" y="11" width="1" height="1" fill="#009090"/><rect x="9" y="11" width="1" height="1" fill="#00f0f0"/><rect x="10" y="11" width="1" height="1" fill="#e0e0e0"/><rect x="14" y="11" width="1" height="1" fill="#9c9c9c"/><rect x="15" y="11" width="1" height="1" fill="#000"/><rect x="0" y="12" width="1" height="1" fill="#9c9c9c"/><rect x="3" y="12" width="3" height="1" fill="#e0e0e0"/><rect x="8" y="12" width="2" height="1" fill="#e0e0e0"/><rect x="14" y="12" width="1" height="1" fill="#9c9c9c"/><rect x="15" y="12" width="1" height="1" fill="#000"/><rect x="0" y="13" width="1" height="1" fill="#9c9c9c"/><rect x="14" y="13" width="1" height="1" fill="#9c9c9c"/><rect x="15" y="13" width="1" height="1" fill="#000"/><rect x="0" y="14" width="15" height="1" fill="#9c9c9c"/><rect x="15" y="14" width="1" height="1" fill="#000"/><rect x="0" y="15" width="16" height="1" fill="#000"/></svg><span class="f" style="letter-spacing:-.08px">Навигация.vbs</span><span class="dt">11.12.2024 11:24</span><span class="ty">Файл сценария V...</span><span class="sz">32 КБ</span></div>
 <div class="row" style="top:226px"><svg width="16" height="16" viewBox="0 0 16 16" shape-rendering="crispEdges"><rect x="1" y="1" width="13" height="13" fill="#050505"/><rect x="0" y="0" width="15" height="1" fill="#9c9c9c"/><rect x="15" y="0" width="1" height="1" fill="#000"/><rect x="0" y="1" width="1" height="1" fill="#9c9c9c"/><rect x="14" y="1" width="1" height="1" fill="#9c9c9c"/><rect x="15" y="1" width="1" height="1" fill="#000"/><rect x="0" y="2" width="1" height="1" fill="#9c9c9c"/><rect x="4" y="2" width="2" height="1" fill="#e0e0e0"/><rect x="6" y="2" width="1" height="1" fill="#00f0f0"/><rect x="8" y="2" width="1" height="1" fill="#00f0f0"/><rect x="10" y="2" width="1" height="1" fill="#e0e0e0"/><rect x="14" y="2" width="1" height="1" fill="#9c9c9c"/><rect x="15" y="2" width="1" height="1" fill="#000"/><rect x="0" y="3" width="1" height="1" fill="#9c9c9c"/><rect x="3" y="3" width="2" height="1" fill="#e0e0e0"/><rect x="6" y="3" width="1" height="1" fill="#00f0f0"/><rect x="7" y="3" width="2" height="1" fill="#009090"/><rect x="9" y="3" width="1" height="1" fill="#e0e0e0"/><rect x="11" y="3" width="1" height="1" fill="#e0e0e0"/><rect x="14" y="3" width="1" height="1" fill="#9c9c9c"/><rect x="15" y="3" width="1" height="1" fill="#000"/><rect x="0" y="4" width="1" height="1" fill="#9c9c9c"/><rect x="3" y="4" width="1" height="1" fill="#e0e0e0"/><rect x="5" y="4" width="2" height="1" fill="#00f0f0"/><rect x="7" y="4" width="1" height="1" fill="#009090"/><rect x="8" y="4" width="1" height="1" fill="#e0e0e0"/><rect x="11" y="4" width="1" height="1" fill="#e0e0e0"/><rect x="14" y="4" width="1" height="1" fill="#9c9c9c"/><rect x="15" y="4" width="1" height="1" fill="#000"/><rect x="0" y="5" width="1" height="1" fill="#9c9c9c"/><rect x="3" y="5" width="1" height="1" fill="#e0e0e0"/><rect x="4" y="5" width="1" height="1" fill="#00f0f0"/><rect x="5" y="5" width="3" height="1" fill="#009090"/><rect x="8" y="5" width="2" height="1" fill="#e0e0e0"/><rect x="14" y="5" width="1" height="1" fill="#9c9c9c"/><rect x="15" y="5" width="1" height="1" fill="#000"/><rect x="0" y="6" width="1" height="1" fill="#9c9c9c"/><rect x="3" y="6" width="1" height="1" fill="#e0e0e0"/><rect x="4" y="6" width="1" height="1" fill="#00f0f0"/><rect x="5" y="6" width="1" height="1" fill="#009090"/><rect x="6" y="6" width="1" height="1" fill="#00f0f0"/><rect x="7" y="6" width="2" height="1" fill="#009090"/><rect x="9" y="6" width="1" height="1" fill="#e0e0e0"/><rect x="14" y="6" width="1" height="1" fill="#9c9c9c"/><rect x="15" y="6" width="1" height="1" fill="#000"/><rect x="0" y="7" width="1" height="1" fill="#9c9c9c"/><rect x="4" y="7" width="1" height="1" fill="#e0e0e0"/><rect x="5" y="7" width="1" height="1" fill="#00f0f0"/><rect x="6" y="7" width="3" height="1" fill="#009090"/><rect x="9" y="7" width="1" height="1" fill="#00f0f0"/><rect x="10" y="7" width="1" height="1" fill="#e0e0e0"/><rect x="14" y="7" width="1" height="1" fill="#9c9c9c"/><rect x="15" y="7" width="1" height="1" fill="#000"/><rect x="0" y="8" width="1" height="1" fill="#9c9c9c"/><rect x="5" y="8" width="1" height="1" fill="#e0e0e0"/><rect x="6" y="8" width="1" height="1" fill="#00f0f0"/><rect x="7" y="8" width="1" height="1" fill="#009090"/><rect x="8" y="8" width="1" height="1" fill="#00f0f0"/><rect x="9" y="8" width="1" height="1" fill="#009090"/><rect x="10" y="8" width="2" height="1" fill="#e0e0e0"/><rect x="14" y="8" width="1" height="1" fill="#9c9c9c"/><rect x="15" y="8" width="1" height="1" fill="#000"/><rect x="0" y="9" width="1" height="1" fill="#9c9c9c"/><rect x="4" y="9" width="3" height="1" fill="#e0e0e0"/><rect x="8" y="9" width="2" height="1" fill="#009090"/><rect x="10" y="9" width="1" height="1" fill="#00f0f0"/><rect x="11" y="9" width="1" height="1" fill="#e0e0e0"/><rect x="14" y="9" width="1" height="1" fill="#9c9c9c"/><rect x="15" y="9" width="1" height="1" fill="#000"/><rect x="0" y="10" width="1" height="1" fill="#9c9c9c"/><rect x="3" y="10" width="1" height="1" fill="#e0e0e0"/><rect x="10" y="10" width="1" height="1" fill="#00f0f0"/><rect x="11" y="10" width="1" height="1" fill="#e0e0e0"/><rect x="14" y="10" width="1" height="1" fill="#9c9c9c"/><rect x="15" y="10" width="1" height="1" fill="#000"/><rect x="0" y="11" width="1" height="1" fill="#9c9c9c"/><rect x="2" y="11" width="1" height="1" fill="#e0e0e0"/><rect x="4" y="11" width="1" height="1" fill="#00f0f0"/><rect x="5" y="11" width="1" height="1" fill="#e0e0e0"/><rect x="7" y="11" width="1" height="1" fill="#00f0f0"/><rect x="8" y="11" width="1" height="1" fill="#009090"/><rect x="9" y="11" width="1" height="1" fill="#00f0f0"/><rect x="10" y="11" width="1" height="1" fill="#e0e0e0"/><rect x="14" y="11" width="1" height="1" fill="#9c9c9c"/><rect x="15" y="11" width="1" height="1" fill="#000"/><rect x="0" y="12" width="1" height="1" fill="#9c9c9c"/><rect x="3" y="12" width="3" height="1" fill="#e0e0e0"/><rect x="8" y="12" width="2" height="1" fill="#e0e0e0"/><rect x="14" y="12" width="1" height="1" fill="#9c9c9c"/><rect x="15" y="12" width="1" height="1" fill="#000"/><rect x="0" y="13" width="1" height="1" fill="#9c9c9c"/><rect x="14" y="13" width="1" height="1" fill="#9c9c9c"/><rect x="15" y="13" width="1" height="1" fill="#000"/><rect x="0" y="14" width="15" height="1" fill="#9c9c9c"/><rect x="15" y="14" width="1" height="1" fill="#000"/><rect x="0" y="15" width="16" height="1" fill="#000"/></svg><span class="f" style="letter-spacing:-0.12px">Открыть файл из директивы Загрузить...</span><span class="dt">30.03.2015 13:51</span><span class="ty">Файл сценария V...</span><span class="sz">5 КБ</span></div>
 <div class="row" style="top:247px"><svg width="16" height="16" viewBox="0 0 16 16" shape-rendering="crispEdges"><rect x="1" y="1" width="13" height="13" fill="#050505"/><rect x="0" y="0" width="15" height="1" fill="#9c9c9c"/><rect x="15" y="0" width="1" height="1" fill="#000"/><rect x="0" y="1" width="1" height="1" fill="#9c9c9c"/><rect x="14" y="1" width="1" height="1" fill="#9c9c9c"/><rect x="15" y="1" width="1" height="1" fill="#000"/><rect x="0" y="2" width="1" height="1" fill="#9c9c9c"/><rect x="4" y="2" width="2" height="1" fill="#e0e0e0"/><rect x="6" y="2" width="1" height="1" fill="#00f0f0"/><rect x="8" y="2" width="1" height="1" fill="#00f0f0"/><rect x="10" y="2" width="1" height="1" fill="#e0e0e0"/><rect x="14" y="2" width="1" height="1" fill="#9c9c9c"/><rect x="15" y="2" width="1" height="1" fill="#000"/><rect x="0" y="3" width="1" height="1" fill="#9c9c9c"/><rect x="3" y="3" width="2" height="1" fill="#e0e0e0"/><rect x="6" y="3" width="1" height="1" fill="#00f0f0"/><rect x="7" y="3" width="2" height="1" fill="#009090"/><rect x="9" y="3" width="1" height="1" fill="#e0e0e0"/><rect x="11" y="3" width="1" height="1" fill="#e0e0e0"/><rect x="14" y="3" width="1" height="1" fill="#9c9c9c"/><rect x="15" y="3" width="1" height="1" fill="#000"/><rect x="0" y="4" width="1" height="1" fill="#9c9c9c"/><rect x="3" y="4" width="1" height="1" fill="#e0e0e0"/><rect x="5" y="4" width="2" height="1" fill="#00f0f0"/><rect x="7" y="4" width="1" height="1" fill="#009090"/><rect x="8" y="4" width="1" height="1" fill="#e0e0e0"/><rect x="11" y="4" width="1" height="1" fill="#e0e0e0"/><rect x="14" y="4" width="1" height="1" fill="#9c9c9c"/><rect x="15" y="4" width="1" height="1" fill="#000"/><rect x="0" y="5" width="1" height="1" fill="#9c9c9c"/><rect x="3" y="5" width="1" height="1" fill="#e0e0e0"/><rect x="4" y="5" width="1" height="1" fill="#00f0f0"/><rect x="5" y="5" width="3" height="1" fill="#009090"/><rect x="8" y="5" width="2" height="1" fill="#e0e0e0"/><rect x="14" y="5" width="1" height="1" fill="#9c9c9c"/><rect x="15" y="5" width="1" height="1" fill="#000"/><rect x="0" y="6" width="1" height="1" fill="#9c9c9c"/><rect x="3" y="6" width="1" height="1" fill="#e0e0e0"/><rect x="4" y="6" width="1" height="1" fill="#00f0f0"/><rect x="5" y="6" width="1" height="1" fill="#009090"/><rect x="6" y="6" width="1" height="1" fill="#00f0f0"/><rect x="7" y="6" width="2" height="1" fill="#009090"/><rect x="9" y="6" width="1" height="1" fill="#e0e0e0"/><rect x="14" y="6" width="1" height="1" fill="#9c9c9c"/><rect x="15" y="6" width="1" height="1" fill="#000"/><rect x="0" y="7" width="1" height="1" fill="#9c9c9c"/><rect x="4" y="7" width="1" height="1" fill="#e0e0e0"/><rect x="5" y="7" width="1" height="1" fill="#00f0f0"/><rect x="6" y="7" width="3" height="1" fill="#009090"/><rect x="9" y="7" width="1" height="1" fill="#00f0f0"/><rect x="10" y="7" width="1" height="1" fill="#e0e0e0"/><rect x="14" y="7" width="1" height="1" fill="#9c9c9c"/><rect x="15" y="7" width="1" height="1" fill="#000"/><rect x="0" y="8" width="1" height="1" fill="#9c9c9c"/><rect x="5" y="8" width="1" height="1" fill="#e0e0e0"/><rect x="6" y="8" width="1" height="1" fill="#00f0f0"/><rect x="7" y="8" width="1" height="1" fill="#009090"/><rect x="8" y="8" width="1" height="1" fill="#00f0f0"/><rect x="9" y="8" width="1" height="1" fill="#009090"/><rect x="10" y="8" width="2" height="1" fill="#e0e0e0"/><rect x="14" y="8" width="1" height="1" fill="#9c9c9c"/><rect x="15" y="8" width="1" height="1" fill="#000"/><rect x="0" y="9" width="1" height="1" fill="#9c9c9c"/><rect x="4" y="9" width="3" height="1" fill="#e0e0e0"/><rect x="8" y="9" width="2" height="1" fill="#009090"/><rect x="10" y="9" width="1" height="1" fill="#00f0f0"/><rect x="11" y="9" width="1" height="1" fill="#e0e0e0"/><rect x="14" y="9" width="1" height="1" fill="#9c9c9c"/><rect x="15" y="9" width="1" height="1" fill="#000"/><rect x="0" y="10" width="1" height="1" fill="#9c9c9c"/><rect x="3" y="10" width="1" height="1" fill="#e0e0e0"/><rect x="10" y="10" width="1" height="1" fill="#00f0f0"/><rect x="11" y="10" width="1" height="1" fill="#e0e0e0"/><rect x="14" y="10" width="1" height="1" fill="#9c9c9c"/><rect x="15" y="10" width="1" height="1" fill="#000"/><rect x="0" y="11" width="1" height="1" fill="#9c9c9c"/><rect x="2" y="11" width="1" height="1" fill="#e0e0e0"/><rect x="4" y="11" width="1" height="1" fill="#00f0f0"/><rect x="5" y="11" width="1" height="1" fill="#e0e0e0"/><rect x="7" y="11" width="1" height="1" fill="#00f0f0"/><rect x="8" y="11" width="1" height="1" fill="#009090"/><rect x="9" y="11" width="1" height="1" fill="#00f0f0"/><rect x="10" y="11" width="1" height="1" fill="#e0e0e0"/><rect x="14" y="11" width="1" height="1" fill="#9c9c9c"/><rect x="15" y="11" width="1" height="1" fill="#000"/><rect x="0" y="12" width="1" height="1" fill="#9c9c9c"/><rect x="3" y="12" width="3" height="1" fill="#e0e0e0"/><rect x="8" y="12" width="2" height="1" fill="#e0e0e0"/><rect x="14" y="12" width="1" height="1" fill="#9c9c9c"/><rect x="15" y="12" width="1" height="1" fill="#000"/><rect x="0" y="13" width="1" height="1" fill="#9c9c9c"/><rect x="14" y="13" width="1" height="1" fill="#9c9c9c"/><rect x="15" y="13" width="1" height="1" fill="#000"/><rect x="0" y="14" width="15" height="1" fill="#9c9c9c"/><rect x="15" y="14" width="1" height="1" fill="#000"/><rect x="0" y="15" width="16" height="1" fill="#000"/></svg><span class="f" style="letter-spacing:-.11px">ОткрытьВПредприятии.vbs</span><span class="dt">30.03.2015 13:51</span><span class="ty">Файл сценария V...</span><span class="sz">4 КБ</span></div>
 <div class="row" style="top:268px"><svg width="16" height="16" viewBox="0 0 16 16" shape-rendering="crispEdges"><rect x="15" y="0" width="1" height="1" fill="#000"/><rect x="14" y="1" width="1" height="1" fill="#e0e0e0"/><rect x="15" y="1" width="1" height="1" fill="#000"/><rect x="4" y="2" width="2" height="1" fill="#d8d8d8"/><rect x="6" y="2" width="1" height="1" fill="#00f0f0"/><rect x="8" y="2" width="1" height="1" fill="#00f0f0"/><rect x="10" y="2" width="1" height="1" fill="#000"/><rect x="14" y="2" width="1" height="1" fill="#e0e0e0"/><rect x="15" y="2" width="1" height="1" fill="#000"/><rect x="3" y="3" width="2" height="1" fill="#d8d8d8"/><rect x="6" y="3" width="1" height="1" fill="#00f0f0"/><rect x="7" y="3" width="2" height="1" fill="#009090"/><rect x="9" y="3" width="1" height="1" fill="#000"/><rect x="11" y="3" width="1" height="1" fill="#000"/><rect x="14" y="3" width="1" height="1" fill="#e0e0e0"/><rect x="15" y="3" width="1" height="1" fill="#000"/><rect x="3" y="4" width="1" height="1" fill="#d8d8d8"/><rect x="5" y="4" width="2" height="1" fill="#00f0f0"/><rect x="7" y="4" width="1" height="1" fill="#009090"/><rect x="8" y="4" width="1" height="1" fill="#000"/><rect x="11" y="4" width="1" height="1" fill="#000"/><rect x="14" y="4" width="1" height="1" fill="#e0e0e0"/><rect x="15" y="4" width="1" height="1" fill="#000"/><rect x="3" y="5" width="1" height="1" fill="#d8d8d8"/><rect x="4" y="5" width="1" height="1" fill="#00f0f0"/><rect x="5" y="5" width="3" height="1" fill="#009090"/><rect x="8" y="5" width="4" height="1" fill="#000"/><rect x="14" y="5" width="1" height="1" fill="#e0e0e0"/><rect x="15" y="5" width="1" height="1" fill="#000"/><rect x="3" y="6" width="1" height="1" fill="#d8d8d8"/><rect x="4" y="6" width="1" height="1" fill="#00f0f0"/><rect x="5" y="6" width="1" height="1" fill="#009090"/><rect x="6" y="6" width="1" height="1" fill="#00f0f0"/><rect x="7" y="6" width="2" height="1" fill="#009090"/><rect x="9" y="6" width="2" height="1" fill="#000"/><rect x="14" y="6" width="1" height="1" fill="#e0e0e0"/><rect x="15" y="6" width="1" height="1" fill="#000"/><rect x="4" y="7" width="1" height="1" fill="#d8d8d8"/><rect x="5" y="7" width="1" height="1" fill="#00f0f0"/><rect x="6" y="7" width="3" height="1" fill="#009090"/><rect x="9" y="7" width="1" height="1" fill="#00f0f0"/><rect x="10" y="7" width="2" height="1" fill="#000"/><rect x="14" y="7" width="1" height="1" fill="#e0e0e0"/><rect x="15" y="7" width="1" height="1" fill="#000"/><rect x="5" y="8" width="1" height="1" fill="#d8d8d8"/><rect x="6" y="8" width="1" height="1" fill="#00f0f0"/><rect x="7" y="8" width="1" height="1" fill="#009090"/><rect x="8" y="8" width="1" height="1" fill="#00f0f0"/><rect x="9" y="8" width="1" height="1" fill="#009090"/><rect x="11" y="8" width="2" height="1" fill="#000"/><rect x="14" y="8" width="1" height="1" fill="#e0e0e0"/><rect x="15" y="8" width="1" height="1" fill="#000"/><rect x="4" y="9" width="3" height="1" fill="#d8d8d8"/><rect x="8" y="9" width="2" height="1" fill="#009090"/><rect x="10" y="9" width="1" height="1" fill="#00f0f0"/><rect x="12" y="9" width="1" height="1" fill="#000"/><rect x="14" y="9" width="1" height="1" fill="#e0e0e0"/><rect x="15" y="9" width="1" height="1" fill="#000"/><rect x="3" y="10" width="1" height="1" fill="#d8d8d8"/><rect x="6" y="10" width="2" height="1" fill="#000"/><rect x="10" y="10" width="1" height="1" fill="#00f0f0"/><rect x="11" y="10" width="2" height="1" fill="#000"/><rect x="14" y="10" width="1" height="1" fill="#e0e0e0"/><rect x="15" y="10" width="1" height="1" fill="#000"/><rect x="2" y="11" width="1" height="1" fill="#d8d8d8"/><rect x="4" y="11" width="1" height="1" fill="#00f0f0"/><rect x="5" y="11" width="1" height="1" fill="#d8d8d8"/><rect x="6" y="11" width="1" height="1" fill="#000"/><rect x="7" y="11" width="1" height="1" fill="#00f0f0"/><rect x="8" y="11" width="1" height="1" fill="#009090"/><rect x="9" y="11" width="1" height="1" fill="#00f0f0"/><rect x="11" y="11" width="1" height="1" fill="#000"/><rect x="14" y="11" width="1" height="1" fill="#e0e0e0"/><rect x="15" y="11" width="1" height="1" fill="#000"/><rect x="3" y="12" width="3" height="1" fill="#d8d8d8"/><rect x="6" y="12" width="2" height="1" fill="#000"/><rect x="8" y="12" width="2" height="1" fill="#d8d8d8"/><rect x="10" y="12" width="1" height="1" fill="#000"/><rect x="14" y="12" width="1" height="1" fill="#e0e0e0"/><rect x="15" y="12" width="1" height="1" fill="#000"/><rect x="4" y="13" width="6" height="1" fill="#000"/><rect x="14" y="13" width="1" height="1" fill="#e0e0e0"/><rect x="15" y="13" width="1" height="1" fill="#000"/><rect x="1" y="14" width="14" height="1" fill="#e0e0e0"/><rect x="15" y="14" width="1" height="1" fill="#000"/><rect x="0" y="15" width="16" height="1" fill="#000"/></svg><span class="f" style="letter-spacing:.03px">Переходы по модулю.vbs</span><span class="dt">30.03.2015 13:51</span><span class="ty">Файл сценария V...</span><span class="sz">3 КБ</span></div>
</div>
</body>
</html>
